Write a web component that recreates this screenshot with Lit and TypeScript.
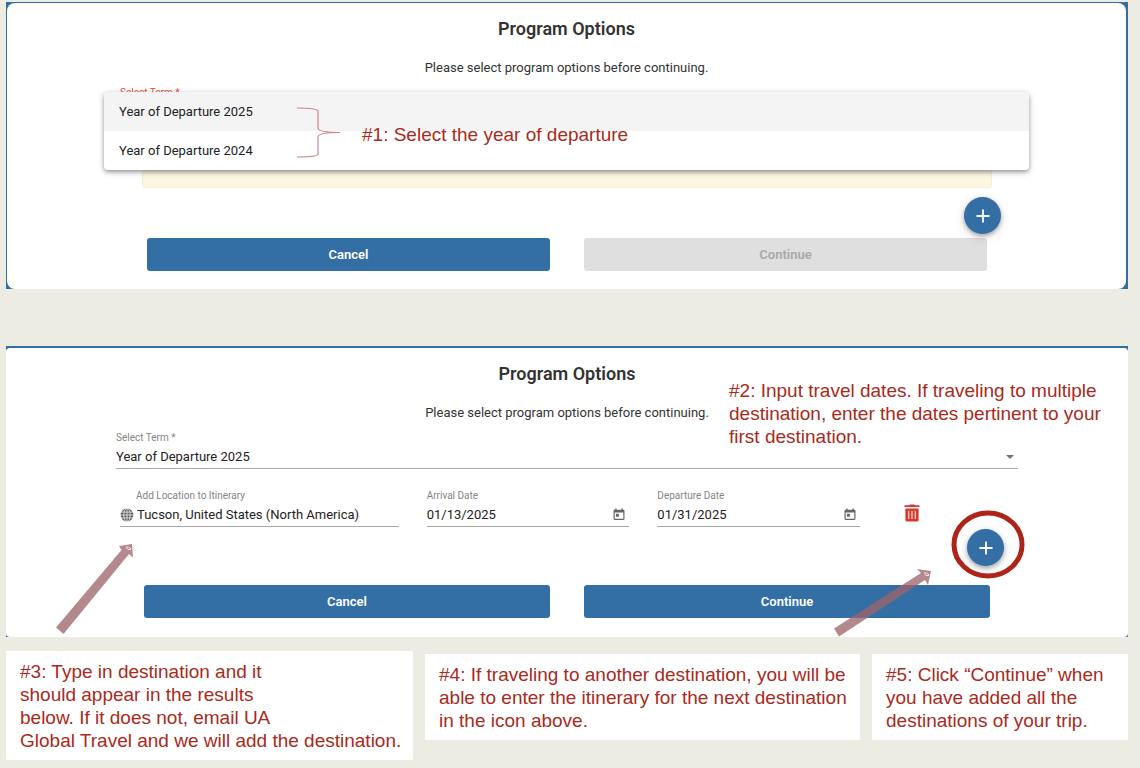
import { LitElement, html, css, svg } from "lit";
import { customElement, property } from "lit/decorators.js";

const plusIcon = html`<svg class="plus" viewBox="0 0 14 14" aria-hidden="true">
  <path d="M7 .5v13M.5 7h13" fill="none" stroke="#fff" stroke-width="1.8" />
</svg>`;

const calendarIcon = html`<svg class="calendar" viewBox="0 0 12 13" aria-hidden="true">
  <path
    fill="#666"
    fill-rule="evenodd"
    d="M2.2.5h1.4v1.2h4.8V.5h1.4v1.2h.5c.7 0 1.2.5 1.2 1.2v7.9c0 .7-.5 1.2-1.2 1.2H1.7C1 12 .5 11.500.5 10.800V2.900C.5 2.200 1 1.700 1.700 1.700h.5zM1.700 4.600v6.200h8.600V4.600zM2.900 5.800h3v3h-3z"
  />
</svg>`;

const globeIcon = html`<svg class="globe" viewBox="0 0 14 14" aria-hidden="true">
  <circle cx="7" cy="7" r="6.400" fill="#5c5c5c" />
  <g fill="none" stroke="#fff" stroke-width=".7">
    <path d="M7 0v14M0 7h14M1 4.100h12M1 9.900h12" />
    <ellipse cx="7" cy="7" rx="3.200" ry="6.600" />
  </g>
</svg>`;

const trashIcon = html`<svg class="trash" viewBox="0 0 16 18" aria-hidden="true">
  <path
    fill="#d63a2b"
    d="M5.300 1.200 6 .400h4l.7.800h4.300c.4 0 .6.200.6.500v1.400H.4V1.700c0-.3.200-.5.600-.5zM1.400 4.400h13.200v11.400c0 1-.7 1.800-1.700 1.800H3.100c-1 0-1.700-.8-1.700-1.800z"
  />
  <path d="M4.700 6.700v8.300M8 6.700v8.300M11.300 6.700v8.300" stroke="#f6cfca" stroke-width="1.300" />
</svg>`;

const arrowMark = (x: number, y: number) =>
  svg`<path d="M${x} ${y}v2.500l1 1h2.500v-1.500M${x + 1.5} ${y + 1}l1.500 1" fill="none" stroke="#fff" stroke-width=".9" />`;

@customElement("option-panel")
class OptionPanel extends LitElement {
  @property({ type: Boolean, reflect: true }) framed = false;

  static styles = css`
    :host {
      display: block;
      background: #336ea5;
      padding-top: 2px;
    }
    :host([framed]) {
      padding: 1px 2px 0 1px;
    }
    .sheet {
      position: relative;
      background: #fff;
      border-radius: 4px;
      padding: 14px 0 19px;
      text-align: center;
    }
    :host([framed]) .sheet {
      border-radius: 8px;
      padding-bottom: 18px;
    }
    h2 {
      margin: 0;
      font-size: 18px;
      line-height: 24px;
      font-weight: 600;
      color: #333;
    }
    p {
      margin: 17px 0 9px;
      font-size: 13px;
      line-height: 20px;
      color: #333;
    }
  `;

  render() {
    return html`<section class="sheet">
      <h2>Program Options</h2>
      <p>Please select program options before continuing.</p>
      <slot></slot>
    </section>`;
  }
}

@customElement("app-root")
class AppRoot extends LitElement {
  static styles = css`
    :host {
      display: block;
      box-sizing: border-box;
      min-height: 100vh;
      padding: 2px 12px 8px 6px;
      background: #ecece2;
      font-family: Roboto, "Liberation Sans", sans-serif;
      color: #222;
    }
    * {
      box-sizing: border-box;
    }
    option-panel + option-panel {
      margin-top: 57px;
    }
    .form {
      text-align: left;
      padding: 0 110px;
    }
    .form.open {
      padding: 0 113px;
    }
    .field {
      position: relative;
      display: block;
      min-width: 0;
    }
    .label {
      display: block;
      font-size: 10px;
      line-height: 12px;
      margin-bottom: 2px;
      color: #858585;
    }
    .open .label {
      color: #e0523f;
    }
    .box {
      display: flex;
      align-items: center;
      height: 23px;
      padding-bottom: 1px;
      border-bottom: 1px solid #aaa;
    }
    .box input,
    .box select {
      flex: 1;
      min-width: 0;
      width: 100%;
      height: 20px;
      margin: 0;
      padding: 0;
      border: 0;
      outline: 0;
      background: none;
      appearance: none;
      font: 13px/20px Roboto, "Liberation Sans", sans-serif;
      color: #222;
    }
    .caret {
      width: 8px;
      height: 4px;
      margin-right: 4px;
      flex: none;
    }
    .row {
      display: grid;
      grid-template-columns: 11fr 8fr 8fr 130px;
      gap: 28px;
      padding-left: 4px;
      margin-top: 21px;
    }
    .indent {
      padding-left: 16px;
    }
    .globe {
      width: 14px;
      height: 14px;
      margin-right: 3px;
      flex: none;
    }
    .icon {
      display: block;
      padding: 0;
      border: 0;
      background: none;
    }
    .icon svg {
      display: block;
    }
    .calendar {
      width: 12px;
      height: 13px;
      margin-right: 4px;
    }
    .remove {
      justify-self: start;
      align-self: end;
      padding: 0 16px 5px;
    }
    .trash {
      width: 16px;
      height: 18px;
    }
    .menu {
      position: absolute;
      z-index: 1;
      top: 5px;
      left: -16px;
      right: -16px;
      margin: 0;
      padding: 0;
      list-style: none;
      background: #fff;
      border-radius: 4px;
      overflow: hidden;
      box-shadow: 0 2px 4px rgba(0, 0, 0, 0.34), 0 2px 8px rgba(0, 0, 0, 0.12);
      font-size: 13px;
      line-height: 39px;
    }
    .menu li {
      padding: 0 15px;
    }
    .menu li[aria-selected="true"] {
      background: #f4f4f4;
    }
    .alert {
      height: 44px;
      margin: 20px 21px 0 22px;
      background: #fbf7e2;
      border: 1px solid #f5efd2;
      border-radius: 3px;
    }
    .add {
      display: flex;
      justify-content: flex-end;
      padding: 2px 124px 19px 0;
    }
    .add.tight {
      padding: 9px 125px 4px 0;
    }
    .fab {
      position: relative;
      display: grid;
      place-items: center;
      width: 37px;
      height: 37px;
      padding: 0;
      border: 0;
      border-radius: 50%;
      background: #336ea5;
      box-shadow: 0 2px 4px rgba(0, 0, 0, 0.3), 0 3px 12px rgba(0, 0, 0, 0.12);
    }
    .plus {
      width: 14px;
      height: 14px;
    }
    .ring {
      position: absolute;
      left: -16px;
      top: -19px;
      width: 74px;
      height: 69px;
    }
    .actions {
      display: grid;
      grid-template-columns: 1fr 1fr;
      gap: 34px;
      padding: 0 138px;
    }
    .actions.narrow {
      padding: 0 139px 0 140px;
    }
    .action {
      height: 33px;
      padding: 0;
      border: 0;
      border-radius: 3px;
      background: #336ea5;
      color: #fff;
      font: 600 13px/33px Roboto, "Liberation Sans", sans-serif;
    }
    .action:disabled {
      background: #dfdfdf;
      color: #a8a8a8;
    }
    .note {
      margin: 0;
      font: 19px/23px "Liberation Sans", Arial, sans-serif;
      color: #a92a20;
      text-align: left;
    }
    .over {
      position: absolute;
      z-index: 2;
    }
    .brace {
      left: 290px;
      top: 103px;
      width: 44px;
      height: 52px;
    }
    .first {
      left: 355px;
      top: 120px;
    }
    .second {
      right: 16px;
      top: 31px;
      width: 383px;
    }
    .arrow-location {
      left: 50px;
      top: 194px;
      width: 78px;
      height: 92px;
    }
    .arrow-continue {
      right: 196px;
      top: 220px;
      width: 100px;
      height: 70px;
    }
    .notes {
      display: grid;
      grid-template-columns: 407fr 435fr 256fr;
      gap: 12px;
      align-items: start;
      margin-top: 14px;
    }
    .notes .note {
      padding: 9px 8px 8px 14px;
      background: #fff;
    }
    .notes .note + .note {
      margin-top: 3px;
    }
  `;

  private dateField(id: string, label: string, value: string) {
    return html`<div class="field">
      <label class="label" for=${id}>${label}</label>
      <div class="box">
        <input id=${id} type="text" .value=${value} />
        <button class="icon" aria-label="Open calendar">${calendarIcon}</button>
      </div>
    </div>`;
  }

  render() {
    return html`
      <option-panel framed>
        <div class="form open">
          <div class="field">
            <label class="label" for="term-open">Select Term *</label>
            <div class="box">
              <select id="term-open"></select>
            </div>
            <ul class="menu" role="listbox" aria-label="Select Term">
              <li role="option" aria-selected="true">Year of Departure 2025</li>
              <li role="option" aria-selected="false">Year of Departure 2024</li>
            </ul>
          </div>
          <div class="alert"></div>
        </div>
        <div class="add tight">
          <button class="fab" aria-label="Add location">${plusIcon}</button>
        </div>
        <div class="actions narrow">
          <button class="action">Cancel</button>
          <button class="action" disabled>Continue</button>
        </div>
        <svg class="over brace" viewBox="0 0 44 52" aria-hidden="true">
          <path
            d="M0 2C12 2 21 3 21 5V22C21 25 30 26.500 43 26.500C30 26.500 21 28 21 31V48C21 50 12 51 0 51"
            fill="none"
            stroke="#cf8590"
            stroke-width="1.200"
          />
        </svg>
        <p class="note over first">#1: Select the year of departure</p>
      </option-panel>

      <option-panel>
        <div class="form">
          <div class="field">
            <label class="label" for="term">Select Term *</label>
            <div class="box">
              <select id="term">
                <option>Year of Departure 2025</option>
                <option>Year of Departure 2024</option>
              </select>
              <svg class="caret" viewBox="0 0 8 4" aria-hidden="true">
                <path d="M0 0h8L4 4z" fill="#757575" />
              </svg>
            </div>
          </div>
          <div class="row">
            <div class="field">
              <label class="label indent" for="location">Add Location to Itinerary</label>
              <div class="box">
                ${globeIcon}
                <input id="location" type="text" value="Tucson, United States (North America)" />
              </div>
            </div>
            ${this.dateField("arrival", "Arrival Date", "01/13/2025")}
            ${this.dateField("departure", "Departure Date", "01/31/2025")}
            <button class="icon remove" aria-label="Remove location">${trashIcon}</button>
          </div>
        </div>
        <div class="add">
          <button class="fab" aria-label="Add location">
            ${plusIcon}
            <svg class="ring" viewBox="0 0 74 69" aria-hidden="true">
              <ellipse cx="37" cy="34.500" rx="34" ry="31.500" fill="none" stroke="#ae2418" stroke-width="5" />
            </svg>
          </button>
        </div>
        <div class="actions">
          <button class="action">Cancel</button>
          <button class="action">Continue</button>
        </div>
        <p class="note over second">
          #2: Input travel dates. If traveling to multiple destination, enter the dates pertinent to your
          first destination.
        </p>
        <svg class="over arrow-location" viewBox="0 0 78 92" aria-hidden="true">
          <path d="M0 85.500 65.500 8 63 4 76 2 77 15.500 73 12 7.500 92z" fill="rgba(156,100,106,.76)" />
          ${arrowMark(71, 4)}
        </svg>
        <svg class="over arrow-continue" viewBox="0 0 100 70" aria-hidden="true">
          <path d="M2 60.500 89 5 85 1 99 3 96 17 93 12 7 68.500z" fill="rgba(156,100,106,.76)" />
          ${arrowMark(93, 4)}
        </svg>
      </option-panel>

      <div class="notes">
        <p class="note">
          #3: Type in destination and it<br />should appear in the results<br />below. If it does not, email UA<br />Global
          Travel and we will add the destination.
        </p>
        <p class="note">
          #4: If traveling to another destination, you will be able to enter the itinerary for the next destination in
          the icon above.
        </p>
        <p class="note">#5: Click “Continue” when you have added all the destinations of your trip.</p>
      </div>
    `;
  }
}
